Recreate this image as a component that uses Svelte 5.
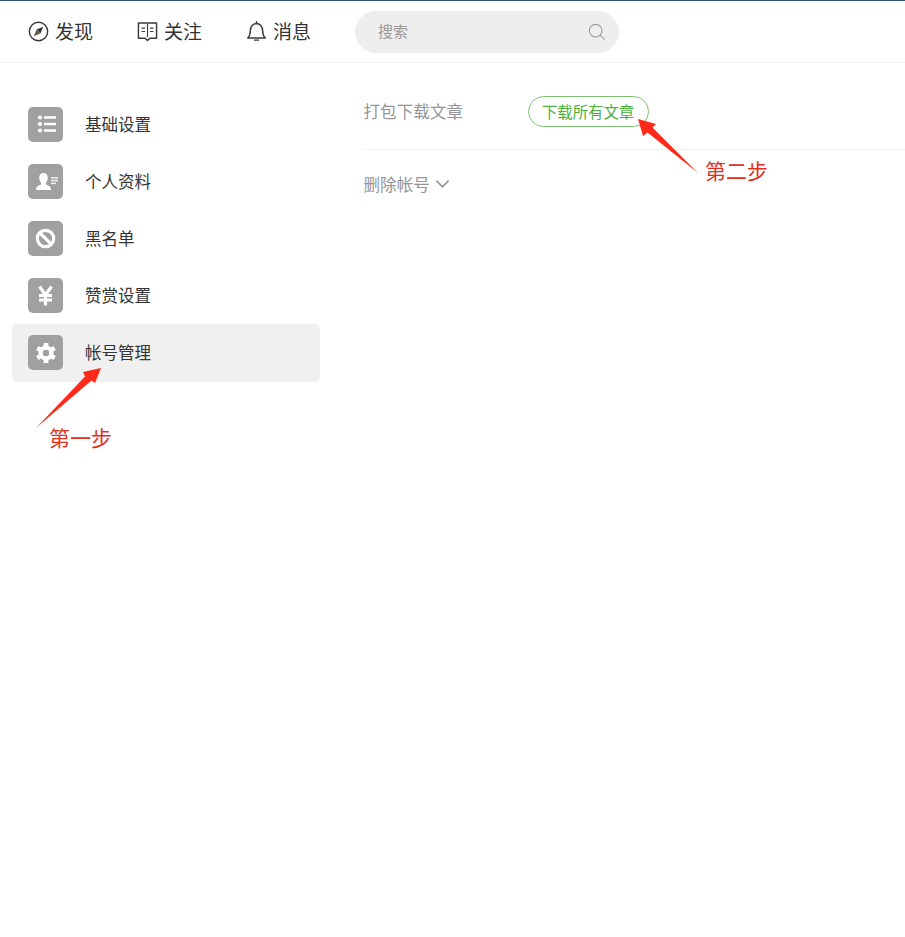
<script lang="ts">
  const nav = [
    { label: '发现', icon: 'compass' },
    { label: '关注', icon: 'book' },
    { label: '消息', icon: 'bell' }
  ]

  const menu = [
    { label: '基础设置', icon: 'list' },
    { label: '个人资料', icon: 'user' },
    { label: '黑名单', icon: 'ban' },
    { label: '赞赏设置', icon: 'yen' },
    { label: '帐号管理', icon: 'gear', active: true }
  ]

  const gearAngles = [0, 60, 120, 180, 240, 300]
</script>

{#snippet navIcon(name: string)}
  <svg class="nav-icon" viewBox="0 0 22 22" fill="none" stroke="#3a3a3a" stroke-width="1.5" aria-hidden="true">
    {#if name === 'compass'}
      <circle cx="11" cy="11" r="9.6" />
      <path d="M16 6 13 13 9 9Z" fill="#333" stroke="none" />
      <path d="M6 16 9 9 13 13Z" fill="#6b5a48" stroke="none" />
    {:else if name === 'book'}
      <path d="M1.5 2H20.5V18H13.5L11 20.5 8.5 18H1.5Z" stroke-linejoin="round" />
      <path d="M11 3V17M4.8 7.5H8.5M4.8 11H8.5M13.5 7.5H17.2M13.5 11H17.2" stroke-width="1.2" />
    {:else}
      <path d="M1.8 17.8C4.2 15.5 4.6 13.5 4.6 10 4.6 6 7.5 2.6 11 2.6S17.4 6 17.4 10C17.4 13.5 17.8 15.5 20.2 17.8Z" stroke-linejoin="round" />
      <path d="M11 .8V2.8M8.8 20H13.2" stroke-linecap="round" />
    {/if}
  </svg>
{/snippet}

{#snippet menuIcon(name: string)}
  <svg class="menu-icon" viewBox="0 0 35 35" aria-hidden="true">
    {#if name === 'list'}
      <g fill="#fff">
        <circle cx="12" cy="10.5" r="2.1" />
        <circle cx="12" cy="17" r="2.1" />
        <circle cx="12" cy="23.5" r="2.1" />
        <rect x="16" y="9.2" width="12" height="2.5" />
        <rect x="16" y="15.8" width="12" height="2.5" />
        <rect x="16" y="22.3" width="12" height="2.5" />
      </g>
    {:else if name === 'user'}
      <g fill="#fff">
        <path d="M8 26C8 22.5 10.5 21.5 13 20.5V18.5C11.8 17.5 11.2 15.5 11.2 13.5 11.2 10.8 12.9 9 15.5 9S19.8 10.8 19.8 13.5C19.8 15.5 19.2 17.5 18 18.5V20.5C20.5 21.5 23 22.5 23 26Z" />
        <rect x="23" y="13" width="7" height="1.5" opacity=".85" />
        <rect x="23" y="15.8" width="7" height="1.5" opacity=".85" />
        <rect x="23" y="18.6" width="5" height="1.5" opacity=".85" />
      </g>
    {:else if name === 'ban'}
      <g fill="none" stroke="#fff" stroke-width="3.2">
        <circle cx="17.5" cy="17.5" r="8.2" />
        <path d="M11.8 11.8 23.2 23.2" />
      </g>
    {:else if name === 'yen'}
      <path d="M11.5 8.5 17.5 17 23.5 8.5M11 17.5H24M11 22H24M17.5 17V27.5" fill="none" stroke="#fff" stroke-width="3.2" />
    {:else}
      <g fill="#fff">
        {#each gearAngles as angle}
          <rect x="15.6" y="8" width="4.8" height="4" transform="rotate({angle} 18 18)" />
        {/each}
      </g>
      <circle cx="18" cy="18" r="5.4" fill="none" stroke="#fff" stroke-width="4.4" />
    {/if}
  </svg>
{/snippet}

<div class="page">
  <header class="topbar">
    <nav class="nav">
      {#each nav as item}
        <div class="nav-item">
          {@render navIcon(item.icon)}
          <span>{item.label}</span>
        </div>
      {/each}
    </nav>
    <div class="search">
      <span>搜索</span>
      <svg viewBox="0 0 20 20" fill="none" stroke="#9a9a9a" stroke-width="1.2" aria-hidden="true">
        <circle cx="8.5" cy="8.5" r="7" />
        <path d="M13.5 13.5 18.5 18.5" />
      </svg>
    </div>
  </header>

  <div class="content">
    <aside class="sidebar">
      {#each menu as item}
        <div class="menu-item" class:active={item.active}>
          {@render menuIcon(item.icon)}
          <span>{item.label}</span>
        </div>
      {/each}
    </aside>

    <main class="main">
      <div class="row export">
        <span class="row-label">打包下载文章</span>
        <button class="download">下载所有文章</button>
      </div>
      <div class="row remove">
        <span class="row-label">删除帐号</span>
        <svg viewBox="0 0 16 10" fill="none" stroke="#969696" stroke-width="1.9" aria-hidden="true">
          <path d="M1.5 1.5 8 8 14.5 1.5" />
        </svg>
      </div>
    </main>
  </div>

  <svg class="arrow arrow-one" viewBox="0 0 70 66" aria-hidden="true">
    <path d="M1 63 50 11.5 48 7 66 3 60 18 56.5 15.5Z" fill="#ff2a1a" />
  </svg>
  <span class="note note-one">第一步</span>

  <svg class="arrow arrow-two" viewBox="0 0 62 58" aria-hidden="true">
    <path d="M1 1 19 6 15.5 9.5 61 55 10.5 14.5 6 18Z" fill="#ff2a1a" />
  </svg>
  <span class="note note-two">第二步</span>
</div>

<style>
  :global(body) {
    background: #fff;
  }

  .page {
    position: relative;
    width: 905px;
    height: 937px;
    overflow: hidden;
    font-family: "Liberation Sans", "Noto Sans CJK SC", sans-serif;
    border-top: 1px solid #2f5577;
    box-sizing: border-box;
  }

  .topbar {
    display: flex;
    align-items: center;
    height: 61px;
    padding-left: 28px;
    border-bottom: 1px solid #f0f0f0;
  }

  .nav {
    display: flex;
    gap: 44px;
  }

  .nav-item {
    display: flex;
    align-items: center;
    gap: 6px;
    font-size: 19px;
    color: #333;
  }

  .nav-item span {
    padding-bottom: 2px;
  }

  .nav-icon {
    width: 21px;
    height: 21px;
  }

  .search {
    display: flex;
    align-items: center;
    justify-content: space-between;
    width: 264px;
    height: 42px;
    margin-left: 44px;
    padding: 0 13px 0 23px;
    box-sizing: border-box;
    border-radius: 21px;
    background: #eee;
    font-size: 15px;
    color: #999;
  }

  .search span {
    padding-bottom: 2px;
  }

  .search svg {
    width: 18px;
    height: 18px;
  }

  .content {
    display: flex;
  }

  .sidebar {
    display: flex;
    flex-direction: column;
    width: 308px;
    margin: 33px 0 0 12px;
    flex-shrink: 0;
  }

  .menu-item {
    display: flex;
    align-items: center;
    gap: 22px;
    height: 57px;
    padding-left: 16px;
    border-radius: 5px;
    font-size: 16.5px;
    color: #333;
  }

  .menu-item span {
    padding-bottom: 2px;
  }

  .menu-item.active {
    background: #f0f0f0;
    height: 56px;
    padding-bottom: 2px;
  }

  .menu-item.active span {
    padding-bottom: 0;
  }

  .menu-icon {
    width: 35px;
    height: 35px;
    border-radius: 5px;
    background: #a0a0a0;
  }

  .main {
    flex: 1;
    margin-left: 44px;
    padding-top: 18px;
  }

  .row {
    display: flex;
    align-items: center;
  }

  .export {
    height: 60px;
    padding-bottom: 8px;
    border-bottom: 1px solid #f0f0f0;
  }

  .remove {
    gap: 5px;
    height: 68px;
  }

  .remove svg {
    width: 15px;
    height: 10px;
  }

  .row-label {
    font-size: 16.6px;
    color: #969696;
    margin-left: -0.5px;
  }

  .download {
    margin-left: 64.5px;
    width: 121px;
    height: 31px;
    padding: 0;
    border: 1px solid #7cc470;
    border-radius: 16px;
    background: #fff;
    font: inherit;
    font-size: 15.4px;
    color: #4caf3f;
  }

  .arrow {
    position: absolute;
  }

  .arrow-one {
    left: 35px;
    top: 364px;
    width: 70px;
    height: 66px;
  }

  .arrow-two {
    left: 637px;
    top: 117px;
    width: 62px;
    height: 58px;
  }

  .note {
    position: absolute;
    font-size: 21px;
    color: #e0301e;
  }

  .note-one {
    left: 49px;
    top: 421px;
  }

  .note-two {
    left: 705px;
    top: 154px;
  }
</style>
